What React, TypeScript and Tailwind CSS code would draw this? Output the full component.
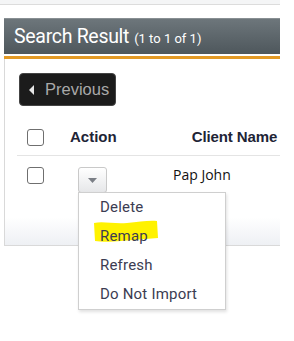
import React from "react";

export default function App() {
  return (
    <div className="relative w-[294px] h-[341px] bg-white overflow-hidden" style={{ fontFamily: "Roboto, 'Liberation Sans', sans-serif" }}>
      {/* top strip */}
      <div className="w-[280px] h-[5px] bg-[#f4f5f6] border-b border-[#dcdcdc]" />
      {/* header */}
      <div className="mt-[13px] ml-[4px] w-[276px] h-[36px] flex items-center pl-[10px] bg-gradient-to-b from-[#6d767b] to-[#4e575c] border-t border-[#888f93]">
        <span className="text-white text-[19.5px] leading-none tracking-[-0.3px]">Search Result</span>
        <span className="text-white text-[13px] leading-none ml-[5px] mt-[3px]">(1 to 1 of 1)</span>
      </div>
      <div className="ml-[4px] w-[276px] h-[2px] bg-white" />
      <div className="ml-[4px] w-[276px] h-[3px] bg-[#e39a25]" />
      {/* panel */}
      <div className="ml-[4px] w-[276px] h-[187px] border-l border-b border-[#d9d9d9] bg-gradient-to-b from-white from-[85%] to-[#eef0f4]">
        <div className="pt-[14px] pl-[14px]">
          <div className="w-[97px] h-[33px] rounded-[4px] bg-[#1b1b1b] border border-[#444] flex items-center pl-[9px]" style={{ fontFamily: "'Liberation Sans', Arial, sans-serif" }}>
            <svg width="5" height="10" viewBox="0 0 5 10"><path d="M5 0 L0 5 L5 10 Z" fill="#e6e6e6" /></svg>
            <span className="ml-[11px] text-[16.5px] text-[#a9a9a9]">Previous</span>
          </div>
        </div>
        {/* table header */}
        <div className="mt-[13px] ml-[12px] h-[37px] border-b border-[#e4e4e4] flex items-center" style={{ fontFamily: "'Liberation Sans', Arial, sans-serif" }}>
          <div className="ml-[10px] w-[17px] h-[17px] rounded-[3px] border border-[#6f6f6f] bg-white" />
          <span className="ml-[26px] text-[15px] font-bold text-[#1e2436]">Action</span>
          <span className="ml-[75px] text-[15px] font-bold text-[#1e2436] tracking-[-0.1px]">Client Name</span>
        </div>
        {/* row */}
        <div className="ml-[12px] flex items-start">
          <div className="ml-[10px] mt-[11px] w-[17px] h-[17px] rounded-[3px] border border-[#6f6f6f] bg-white" />
          <div className="ml-[34px] mt-[11px] w-[29px] h-[26px] rounded-[3px] border border-[#c9c9c9] bg-gradient-to-b from-white to-[#e6e7e9] flex items-center justify-center">
            <svg width="9" height="5" viewBox="0 0 9 5"><path d="M0 0 L9 0 L4.5 5 Z" fill="#7b7f86" /></svg>
          </div>
          <span className="ml-[66px] mt-[8px] text-[14px] text-[#111]" style={{ fontFamily: "'Open Sans', 'Noto Sans', sans-serif" }}>Pap John</span>
        </div>
      </div>
      {/* dropdown menu */}
      <div className="absolute left-[78px] top-[192px] w-[148px] h-[118px] bg-white border border-[#cfcfcf] shadow-[1px_2px_3px_rgba(0,0,0,0.12)]">
        <svg className="absolute left-[14px] top-[27px]" width="66" height="24" viewBox="0 0 66 24">
          <path d="M1 3 C 10 1, 20 4, 34 3 C 46 2, 56 0, 64 1 L 65 18 C 52 19, 40 20, 28 21 C 18 22, 8 22, 2 21 Z" fill="#fff200" />
        </svg>
        <div className="relative flex flex-col text-[15px] text-[#3b3c52] tracking-[0.2px]">
          <div className="h-[29px] flex items-center pl-[21px]">Delete</div>
          <div className="h-[29px] flex items-center pl-[21px]">Remap</div>
          <div className="h-[29px] flex items-center pl-[21px]">Refresh</div>
          <div className="h-[29px] flex items-center pl-[21px]">Do Not Import</div>
        </div>
      </div>
    </div>
  );
}
